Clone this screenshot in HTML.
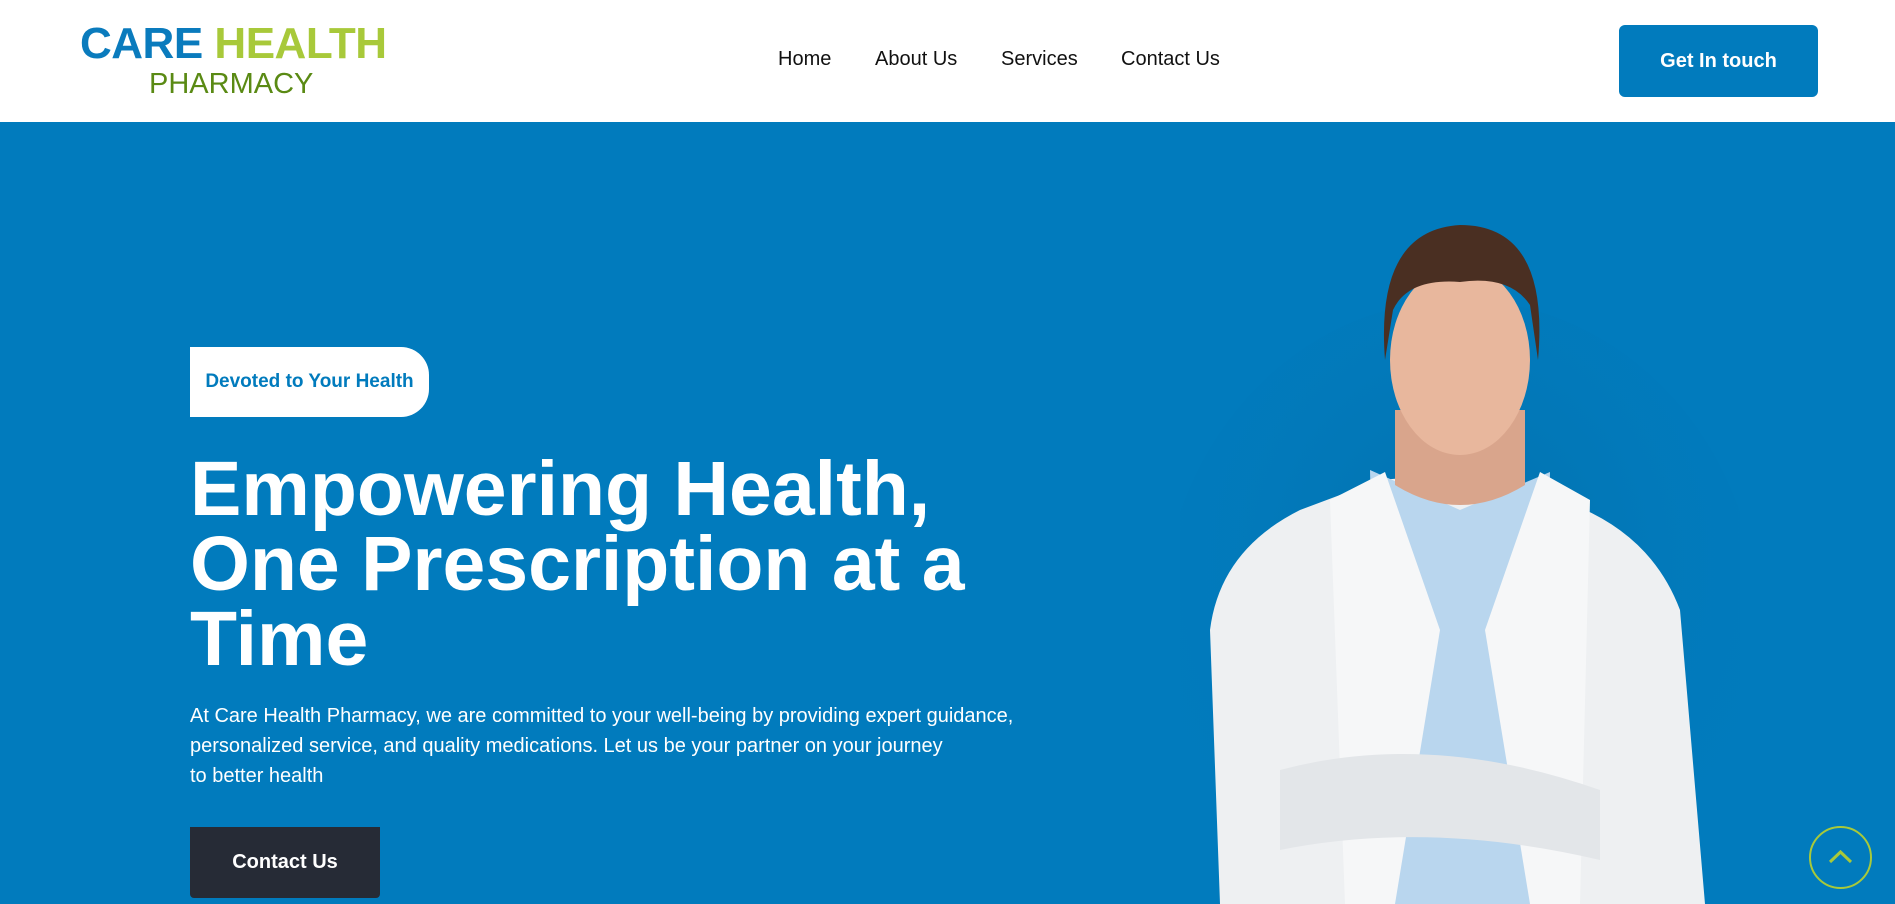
<!DOCTYPE html>
<html><head><meta charset="utf-8"><style>
*{margin:0;padding:0;box-sizing:border-box}
html,body{width:1895px;height:904px;overflow:hidden}
body{font-family:"Liberation Sans",sans-serif;background:#017bbd;position:relative}
header{position:absolute;left:0;top:0;width:1895px;height:122px;background:#fff}
.l1{position:absolute;left:80px;top:19px;font-size:44px;font-weight:bold;letter-spacing:-0.5px;white-space:nowrap}
.l2{position:absolute;left:149px;top:68px;font-size:29px;color:#5a8a14;letter-spacing:0px}
nav a{position:absolute;top:48px;font-size:20px;color:#111;text-decoration:none}
.gbtn{position:absolute;left:1619px;top:25px;width:199px;height:72px;background:#017bbd;border-radius:6px;color:#fff;font-weight:bold;font-size:20px;display:flex;align-items:center;justify-content:center}
.badge{position:absolute;left:190px;top:347px;width:239px;height:70px;background:#fff;border-radius:0 28px 28px 0;color:#017bbd;font-weight:bold;font-size:19px;display:flex;align-items:center;justify-content:center}
h1{position:absolute;left:190px;top:452px;font-size:77px;line-height:75px;color:#fff;font-weight:bold;width:900px}
p{position:absolute;left:190px;top:701px;width:900px;font-size:20px;line-height:30px;color:#fff}
.cbtn{position:absolute;left:190px;top:827px;width:190px;height:71px;background:#262b36;color:#fff;font-weight:bold;font-size:20px;display:flex;align-items:center;justify-content:center;border-radius:0 0 4px 4px}
.top{position:absolute;left:1809px;top:826px;width:63px;height:63px;border:2px solid #a8c93a;border-radius:50%}
</style></head><body>
<header>
<div class="l1"><span style="color:#0a7bbd">CARE</span> <span style="color:#a8c93a">HEALTH</span></div>
<div class="l2">PHARMACY</div>
<nav><a style="left:778px">Home</a><a style="left:875px">About Us</a><a style="left:1001px">Services</a><a style="left:1121px">Contact Us</a></nav>
<div class="gbtn">Get In touch</div>
</header>
<svg style="position:absolute;left:1180px;top:210px" width="560" height="694" viewBox="0 0 560 694">
<defs><radialGradient id="sh" cx="50%" cy="40%" r="60%"><stop offset="0" stop-color="#0a5f8f" stop-opacity=".35"/><stop offset="1" stop-color="#017bbd" stop-opacity="0"/></radialGradient></defs>
<ellipse cx="280" cy="420" rx="300" ry="330" fill="url(#sh)"/>
<path d="M40 694 L30 420 Q40 340 120 300 L200 270 L300 262 L380 290 Q470 320 500 400 L525 694 Z" fill="#eef0f2"/>
<path d="M190 260 L280 300 L370 262 L360 694 L200 694 Z" fill="#b9d6ee"/>
<path d="M150 290 L205 262 L260 420 L215 694 L165 694 Z" fill="#f6f7f8"/>
<path d="M410 290 L360 262 L305 420 L350 694 L400 694 Z" fill="#f6f7f8"/>
<path d="M100 560 Q250 520 420 580 L420 650 Q250 610 100 640 Z" fill="#e3e6e9"/>
<path d="M215 200 L215 275 Q280 315 345 275 L345 200 Z" fill="#d9a58c"/>
<ellipse cx="280" cy="150" rx="70" ry="95" fill="#e8b79d"/>
<path d="M205 150 Q195 20 280 15 Q370 15 358 150 L350 95 Q330 65 280 72 Q228 68 213 100 Z" fill="#4a2f22"/>
</svg>
<div class="badge">Devoted to Your Health</div>
<h1>Empowering Health, One Prescription at a Time</h1>
<p>At Care Health Pharmacy, we are committed to your well-being by providing expert guidance, personalized service, and quality medications. Let us be your partner on your journey<br>to better health</p>
<div class="cbtn">Contact Us</div>
<div class="top"><svg width="59" height="59" viewBox="0 0 59 59"><path d="M19 34 L29.5 24 L40 34" stroke="#a8c93a" stroke-width="3" fill="none"/></svg></div>
</body></html>
